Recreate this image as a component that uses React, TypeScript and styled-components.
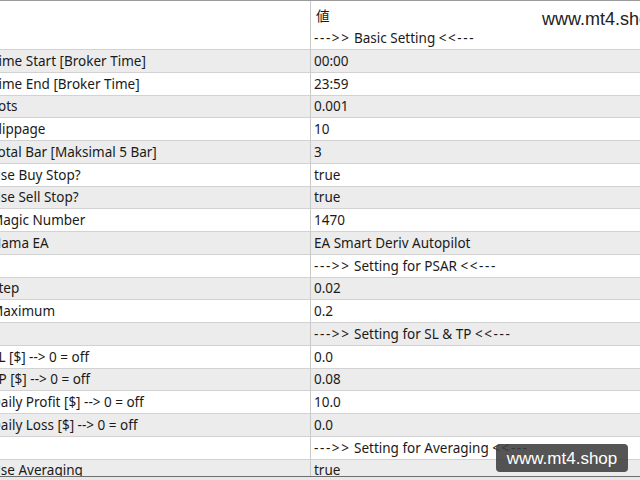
import React from "react";
import styled, { createGlobalStyle } from "styled-components";

const Global = createGlobalStyle`
  html, body { margin: 0; padding: 0; background: #ffffff; }
  body { width: 640px; height: 480px; overflow: hidden; }
`;

const Frame = styled.div`
  position: relative;
  width: 640px;
  height: 480px;
  overflow: hidden;
  display: flex;
  flex-direction: column;
  background: #ffffff;
  border-top: 1px solid #9a9a9a;
  box-sizing: border-box;
  font-family: "Noto Sans", "Open Sans", sans-serif;
  font-size: 13.5px;
  color: #1a1a1a;
`;

const Table = styled.div`
  flex: 1;
  overflow: hidden;
  margin-left: -13px;
  display: grid;
  grid-template-columns: 323px 1fr;
  grid-auto-rows: 22.75px;
  grid-template-rows: 26px 23px;
`;

const Cell = styled.div<{ $shade: boolean; $value?: boolean }>`
  box-sizing: border-box;
  display: flex;
  align-items: center;
  padding-left: ${(p) => (p.$value ? "3px" : "4px")};
  background: ${(p) => (p.$shade ? "#ececec" : "#ffffff")};
  border-bottom: 1px solid #d2d2d2;
  border-left: ${(p) => (p.$value ? "1px solid #cacaca" : "none")};
  white-space: pre;
  overflow: hidden;
`;

const Text = styled.span`
  white-space: pre;
`;

const Arrow = styled.span`
  letter-spacing: 1.6px;
`;

const HeadCell = styled.div<{ $value?: boolean }>`
  box-sizing: border-box;
  display: flex;
  align-items: center;
  padding-left: 5px;
  padding-top: 2px;
  background: #ffffff;
  border-left: ${(p) => (p.$value ? "1px solid #cacaca" : "none")};
  font-family: "Noto Sans CJK JP", "Noto Sans", sans-serif;
`;

const BottomEdge = styled.div`
  height: 3px;
  flex: none;
  border-top: 1px solid #6e6e6e;
  background: #e8e8e8;
`;

const TopMark = styled.div`
  position: absolute;
  left: 542px;
  top: 8px;
  font-family: "Liberation Sans", Arial, sans-serif;
  font-size: 18px;
  color: #222222;
  white-space: nowrap;
`;

const Badge = styled.div`
  position: absolute;
  left: 496px;
  top: 443px;
  width: 132px;
  height: 28px;
  border-radius: 4px;
  background: rgba(62, 62, 62, 0.88);
  color: #ffffff;
  font-family: "Liberation Sans", Arial, sans-serif;
  font-size: 17px;
  display: flex;
  align-items: center;
  justify-content: center;
  padding-top: 1px;
  box-sizing: border-box;
`;

const rows: [string, string][] = [
  ["", "--->> Basic Setting <<---"],
  ["Time Start [Broker Time]", "00:00"],
  ["Time End [Broker Time]", "23:59"],
  ["Lots", "0.001"],
  ["Slippage", "10"],
  ["Total Bar [Maksimal 5 Bar]", "3"],
  ["Use Buy Stop?", "true"],
  ["Use Sell Stop?", "true"],
  ["Magic Number", "1470"],
  ["Nama EA", "EA Smart Deriv Autopilot"],
  ["", "--->> Setting for PSAR <<---"],
  ["Step", "0.02"],
  ["Maximum", "0.2"],
  ["", "--->> Setting for SL & TP <<---"],
  ["SL [$] --> 0 = off", "0.0"],
  ["TP [$] --> 0 = off", "0.08"],
  ["Daily Profit [$] --> 0 = off", "10.0"],
  ["Daily Loss [$] --> 0 = off", "0.0"],
  ["", "--->> Setting for Averaging <<---"],
  ["Use Averaging", "true"],
];

function renderValue(v: string) {
  const m = v.match(/^(--->>)( .* )(<<---)$/);
  if (!m) return <Text>{v}</Text>;
  return (
    <Text>
      <Arrow>{m[1]}</Arrow>
      {m[2]}
      <Arrow>{m[3]}</Arrow>
    </Text>
  );
}

export default function App() {
  return (
    <>
      <Global />
      <Frame>
        <Table>
          <HeadCell />
          <HeadCell $value>値</HeadCell>
          {rows.map(([name, value], i) => (
            <React.Fragment key={i}>
              <Cell $shade={i % 2 === 1}>
                <Text>{name}</Text>
              </Cell>
              <Cell $shade={i % 2 === 1} $value>
                {renderValue(value)}
              </Cell>
            </React.Fragment>
          ))}
        </Table>
        <BottomEdge />
        <TopMark>www.mt4.shop</TopMark>
        <Badge>www.mt4.shop</Badge>
      </Frame>
    </>
  );
}
